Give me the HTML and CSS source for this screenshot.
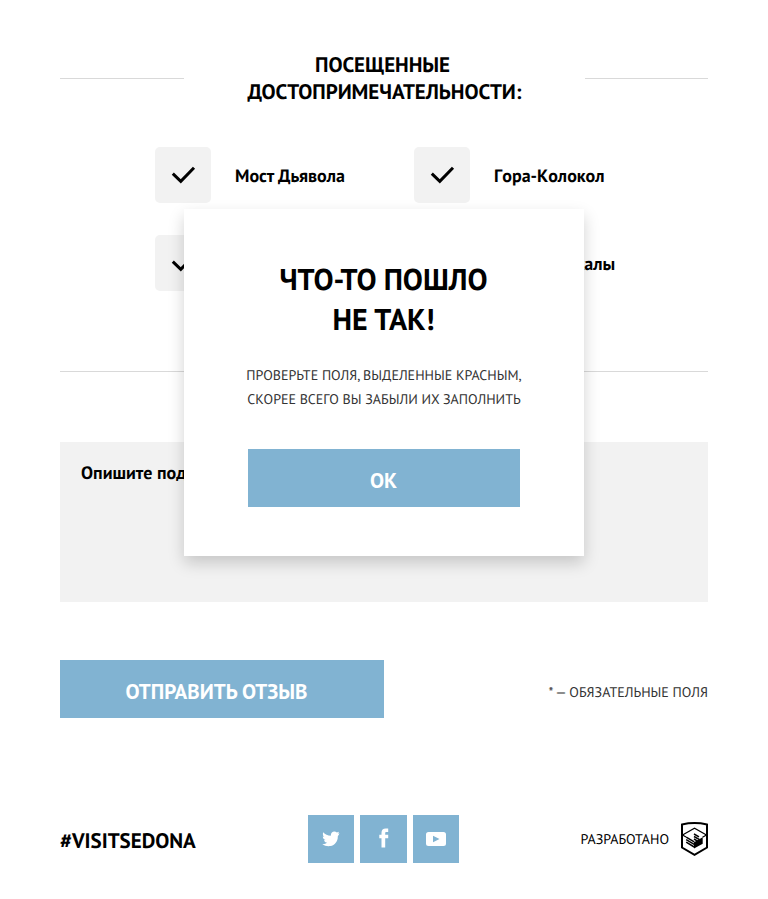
FILE: index.html
```html
<!DOCTYPE html>
<html lang="ru">
<head>
<meta charset="utf-8">
<title>Sedona</title>
<link rel="stylesheet" href="styles.css">
</head>
<body>
<main class="page">
  <section class="places">
    <div class="divider">
      <h2 class="divider-title"><span class="t-visited">Посещенные</span><br>достопримечательности:</h2>
    </div>
    <div class="checks">
      <label class="check"><span class="box"><svg viewBox="0 0 56 56"><path d="M17.800 26.700l8 7.700L39 20.700"/></svg></span><span>Мост Дьявола</span></label>
      <label class="check"><span class="box"><svg viewBox="0 0 56 56"><path d="M17.800 26.700l8 7.700L39 20.700"/></svg></span><span class="unkerned">Гора-Колокол</span></label>
      <label class="check"><span class="box"><svg viewBox="0 0 56 56"><path d="M17.800 26.700l8 7.700L39 20.700"/></svg></span></label>
      <label class="check"><span class="box"><svg viewBox="0 0 56 56"><path d="M17.800 26.700l8 7.700L39 20.700"/></svg></span><span>Красные скалы</span></label>
    </div>
  </section>
  <div class="divider divider-plain"></div>
  <div class="field">Опишите подробно</div>
  <div class="actions">
    <button class="button submit" type="button">Отправить отзыв</button>
    <span class="note">* — обязательные поля</span>
  </div>
  <footer class="footer">
    <span class="hashtag">#visitsedona</span>
    <div class="socials">
      <a class="social"><svg width="18" height="16" viewBox="0 0 18 16"><path d="M17.500 2.300l-1.600.4C16.500 2.200 16.800 1.500 16.900.8l-2 .8C12.500-.7 8.600.8 8.800 4.700 5.800 4.600 3 3.300 1.300 1.200c-.8 1.600-.5 3.700 1.100 4.800L.8 5.500c0 1.800 1.100 3.200 2.800 3.600l-1.600.1c.5 1.400 1.600 2.300 3.100 2.400C3.800 12.800 2.100 13.400.2 13.200c2.200 1.500 5.500 2.300 8.200 1.800 4.600-.8 7.600-5 7.400-9.800.8-.7 1.300-1.800 1.700-2.900z"/></svg></a>
      <a class="social social-wide"><svg width="10" height="20" viewBox="0 0 10 20"><path d="M9.200.5v3.600H7.500c-1 0-1.300.4-1.300 1.300V6.700h3v3.500h-3v9.300H2.500v-9.300H.3V6.700h2.200V4.700C2.500 2 4 .5 6.800.5z"/></svg></a>
      <a class="social"><svg width="20" height="14" viewBox="0 0 20 14"><path fill-rule="evenodd" d="M2.500 0h15Q20 0 20 2.500v9q0 2.500-2.500 2.500h-15Q0 14 0 11.500v-9Q0 0 2.500 0zM7 3.700v6.600L13.500 7z"/></svg></a>
    </div>
    <div class="made"><span>Разработано</span>
      <svg width="27" height="34" viewBox="0 0 27 34"><path class="crest-line" d="M1 2.500Q13.500-.3 26 2.500V25.500L13.500 32.800 1 25.500z"/><path class="crest-thin" d="M1.500 13L13.500 6.300 25.500 13"/><path class="crest-thin" d="M1.500 13l3.500 2M25.500 13l-4 2.200"/><path class="crest-thick" d="M5.200 15.200l8 4.600M5.200 17.700l8 4.600M5.200 20.200l8 4.800M13 12l5 2.900M13 14.500l5.500 3.100M13 17l4 2.300"/><path d="M13 20.300l8.700-5.100v6.600L13 26.600z"/></svg>
    </div>
  </footer>
</main>
<div class="modal" role="dialog">
  <h2 class="modal-title">Что-то пошло<br>не так!</h2>
  <p class="modal-text">Проверьте поля, выделенные красным,<br>скорее всего вы забыли их заполнить</p>
  <button class="button" type="button">Ок</button>
</div>
</body>
</html>
```
FILE: styles.css
```css
* { box-sizing: border-box; }
body {
  margin: 0;
  background: #fff;
  color: #000;
  font-family: "PT Sans", "Noto Sans", sans-serif;
  text-rendering: geometricPrecision;
}
h2, p { margin: 0; }
.page { width: 768px; height: 899px; padding: 50px 60px 0; overflow: hidden; }
.divider { display: flex; align-items: flex-start; justify-content: center; height: 56px; }
.divider::before, .divider::after { content: ""; flex: 1; height: 1px; margin-top: 28px; background: #d9d9d9; }
.divider-title { width: 401px; padding: 0 0 0 1px; text-align: center; font-size: 21px; line-height: 27px; letter-spacing: -.04px; text-transform: uppercase; white-space: nowrap; }
.divider-title { padding-top: 1px; }
.t-visited { margin-right: 4px; }
.divider-plain { margin-top: 52px; height: 99px; }
.checks { display: grid; grid-template-columns: 259px 259px; row-gap: 32px; margin: 41px 0 0 95px; }
.check { display: flex; align-items: center; gap: 24px; font-size: 18px; font-weight: 700; white-space: nowrap; }
.unkerned { font-kerning: none; }
.box { width: 56px; height: 56px; border-radius: 5px; background: #f2f2f2; }
.box svg { display: block; fill: none; stroke: #000; stroke-width: 3; }
.field { height: 160px; padding: 18px 21px; background: #f2f2f2; font-size: 18px; font-weight: 700; line-height: 26px; }
.actions { display: flex; align-items: center; justify-content: space-between; margin-top: 58px; }
.button { display: block; width: 272px; height: 58px; padding: 4px 1px 0 0; border: 0; background: #81b3d2; color: #fff; font: inherit; font-size: 21px; font-weight: 700; text-transform: uppercase; }
.submit { width: 324px; padding-right: 11px; }
.note { padding-top: 6px; color: #333; font-size: 14px; text-transform: uppercase; }
.footer { display: flex; align-items: center; margin-top: 97px; height: 48px; }
.hashtag { width: 248px; padding-top: 3px; font-size: 21px; font-weight: 700; text-transform: uppercase; }
.socials { display: flex; gap: 6px; }
.social { display: flex; align-items: center; justify-content: center; width: 46px; height: 48px; background: #81b3d2; }
.social svg { fill: #fff; }
.social-wide { width: 47px; }
.social-wide svg { margin-top: -2px; }
.made { display: flex; align-items: center; gap: 12px; margin-left: auto; font-size: 14px; text-transform: uppercase; }
.crest-line { fill: none; stroke: #000; stroke-width: 2; }
.crest-thin { fill: none; stroke: #000; stroke-width: 1.2; }
.crest-thick { fill: none; stroke: #000; stroke-width: 1.5; }
.modal { position: absolute; top: 209px; left: 184px; width: 400px; height: 347px; padding: 51px 64px 0; background: #fff; box-shadow: 0 7px 15px rgba(0, 0, 0, .18); }
.modal-title { margin-right: 1px; text-align: center; font-size: 30px; line-height: 40px; text-transform: uppercase; white-space: nowrap; }
.modal-text { margin: 23px -10px 38px; color: #333; text-align: center; font-size: 14px; line-height: 24px; text-transform: uppercase; white-space: nowrap; }
```
